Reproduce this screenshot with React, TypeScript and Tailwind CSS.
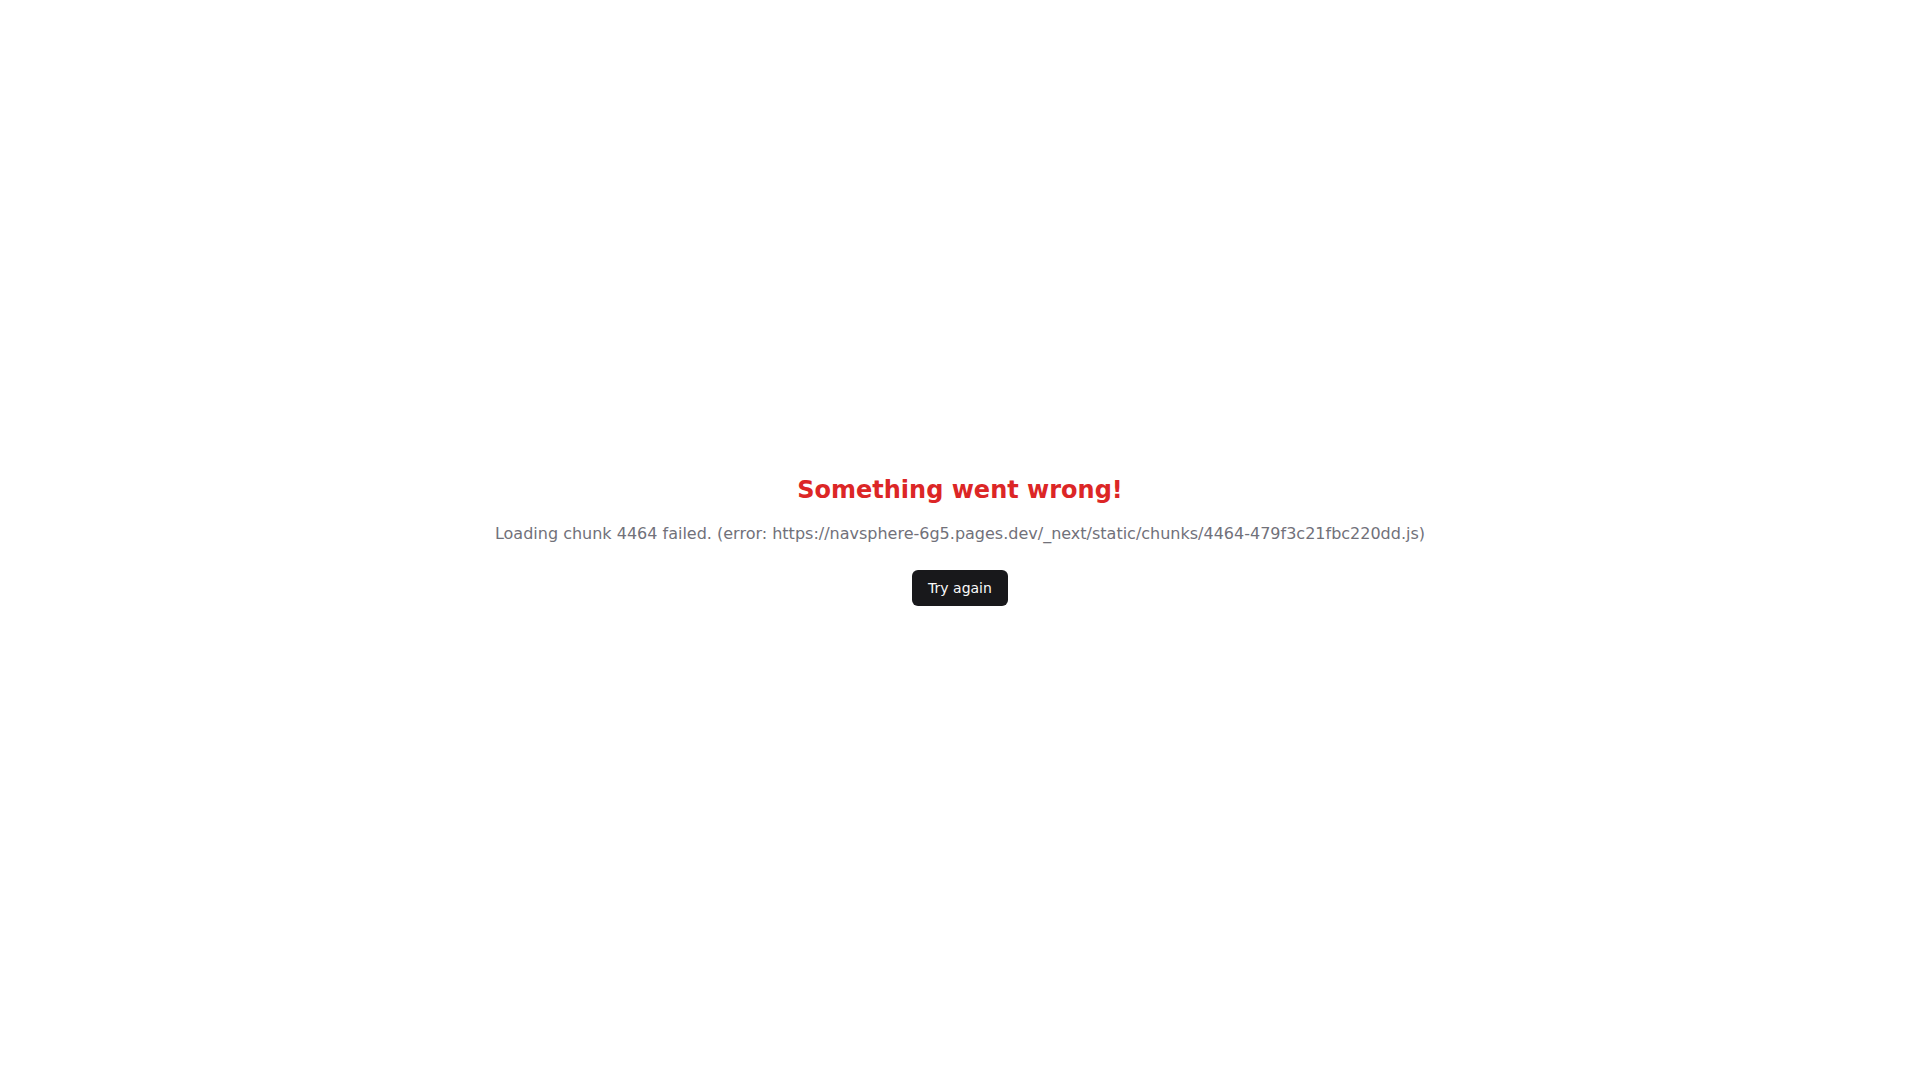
export default function App() {
  return (
    <div className="flex min-h-screen flex-col items-center justify-center bg-white font-['DejaVu_Sans',sans-serif]">
      <h2 className="mb-4 text-2xl font-bold text-[#dc2626]">Something went wrong!</h2>
      <p className="mb-6 text-base text-[#71717a]">
        Loading chunk 4464 failed. (error: https://navsphere-6g5.pages.dev/_next/static/chunks/4464-479f3c21fbc220dd.js)
      </p>
      <button className="rounded-md bg-[#18181b] px-4 py-2 text-sm text-[#fafafa]">Try again</button>
    </div>
  );
}
